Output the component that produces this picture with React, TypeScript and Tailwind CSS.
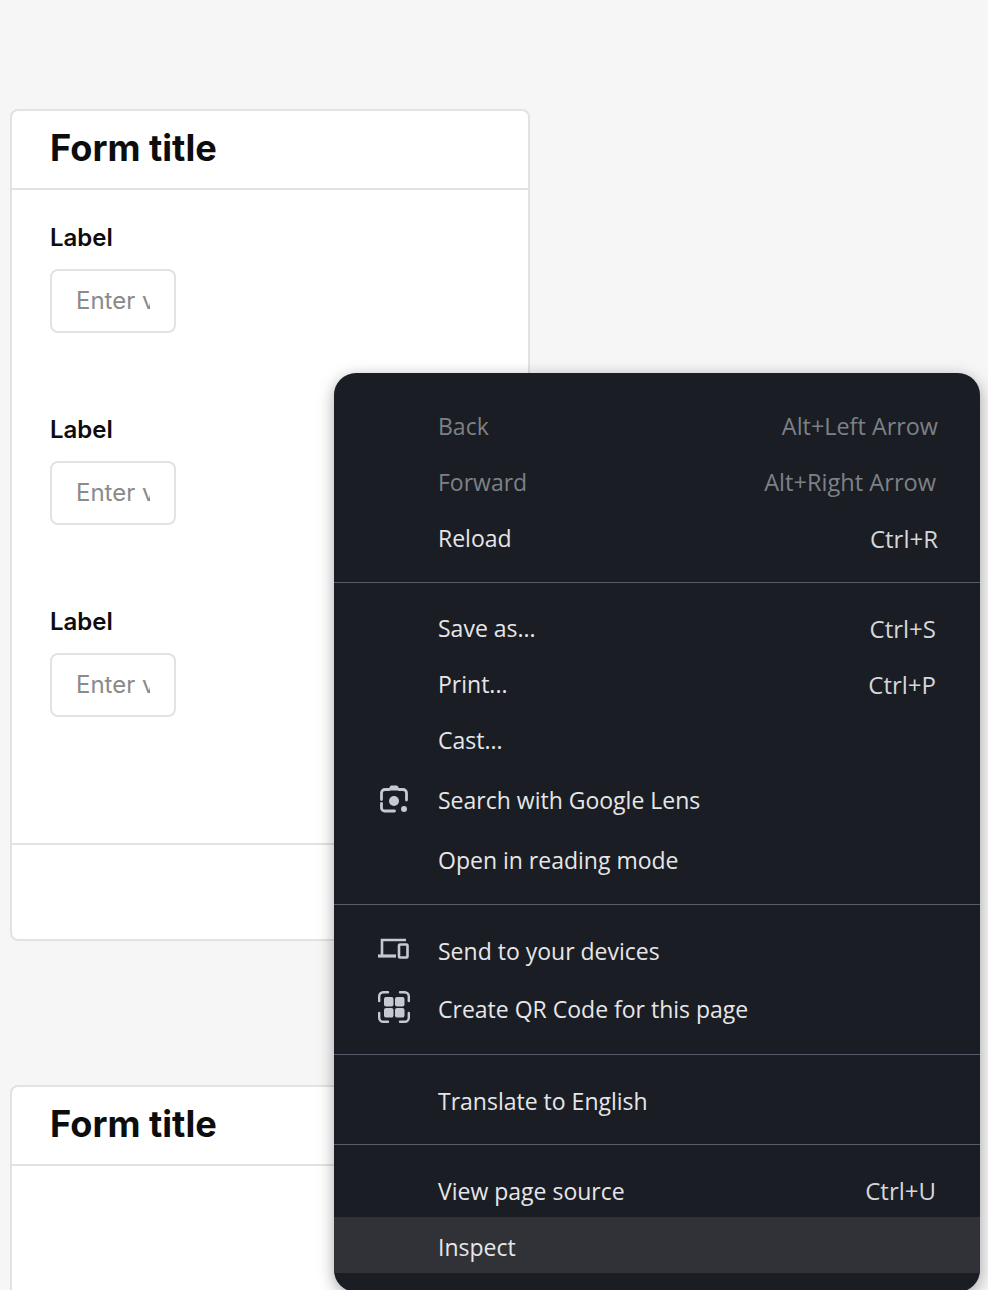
import React from 'react';

const inter = { fontFamily: 'Inter, sans-serif' };

const LensIcon = () => (
  <svg width="28" height="28" viewBox="0 0 28 28" fill="none" stroke="#c7c9d1" strokeWidth="2.8" strokeLinecap="round">
    <path d="M1.500 14.500V8a3.500 3.500 0 0 1 3.500-3.500h4M19 4.500h4a3.500 3.500 0 0 1 3.500 3.500v7" />
    <path d="M1.500 18.500V23a3 3 0 0 0 3 3H14.500" />
    <path d="M8 5.500l2-4a2 2 0 0 1 1.500-1h5a2 2 0 0 1 1.500 1l2 4z" fill="#c7c9d1" stroke="none" />
    <circle cx="14" cy="16" r="5" fill="#c7c9d1" stroke="none" />
    <circle cx="24" cy="24" r="3" fill="#c7c9d1" stroke="none" />
  </svg>
);

const DevicesIcon = () => (
  <svg width="32" height="22" viewBox="0 0 32 22" fill="none" stroke="#c7c9d1" strokeWidth="2.6">
    <path d="M4 17V2h24" />
    <path d="M0 18h18" strokeWidth="3.200" />
    <rect x="21" y="6.500" width="8.500" height="13" rx="1" />
  </svg>
);

const QrIcon = () => (
  <svg width="32" height="32" viewBox="0 0 32 32" fill="none" stroke="#c7c9d1" strokeWidth="2.400" strokeLinecap="round">
    <path d="M10 1.200H5.200a4 4 0 0 0-4 4V10M22 1.200h4.800a4 4 0 0 1 4 4V10M10 30.800H5.200a4 4 0 0 1-4-4V22M22 30.800h4.800a4 4 0 0 0 4-4V22" />
    <rect x="6" y="6" width="9.500" height="9.500" rx="2" fill="#c7c9d1" stroke="none" />
    <rect x="17" y="6" width="9.500" height="9.500" rx="2" fill="#c7c9d1" stroke="none" />
    <rect x="6" y="17" width="9.500" height="9.500" rx="2" fill="#c7c9d1" stroke="none" />
    <rect x="17" y="17" width="9.500" height="9.500" rx="2" fill="#c7c9d1" stroke="none" />
  </svg>
);

const Field = () => (
  <div className="flex flex-col items-start h-[192px]">
    <label className="text-2xl font-semibold leading-[32px] text-[#0d0d0d] mb-[15px]">Label</label>
    <input
      readOnly
      placeholder="Enter value"
      className="w-[126px] h-[64px] pl-[24px] pr-[24px] pb-[2px] text-2xl bg-white border-2 border-[#e2e2e2] rounded-lg outline-none placeholder:text-[#8a8a8a]"
    />
  </div>
);

const FormCard = ({ fields = true }: { fields?: boolean }) => (
  <div className="w-[520px] bg-white border-2 border-[#e2e2e2] rounded-lg" style={inter}>
    <div className="h-[79px] px-[38px] pb-[2px] flex items-center border-b-2 border-[#e2e2e2]">
      <h2 className="text-[36.2px] font-bold text-[#0d0d0d]">Form title</h2>
    </div>
    {fields ? (
      <>
        <div className="h-[653px] px-[38px] pt-[32px]">
          <Field />
          <Field />
          <Field />
        </div>
        <div className="h-[96px] border-t-2 border-[#e2e2e2]" />
      </>
    ) : (
      <div className="h-[300px]" />
    )}
  </div>
);

type ItemProps = {
  label: string;
  shortcut?: string;
  disabled?: boolean;
  active?: boolean;
  icon?: React.ReactNode;
  className?: string;
  iconClass?: string;
  shortcutClass?: string;
};

const Item = ({ label, shortcut, disabled, active, icon, className = 'h-[56px]', iconClass = '', shortcutClass = '' }: ItemProps) => (
  <div
    className={`relative flex items-center pl-[104px] pr-[42px] justify-between ${className} ${active ? 'bg-[#303237]' : ''} ${disabled ? 'text-[#7d8187]' : 'text-[#e6e6e8]'}`}
  >
    {icon && <span className={`absolute left-[44px] top-0 bottom-0 w-[32px] flex items-center justify-center ${iconClass}`}>{icon}</span>}
    <span className="text-[23px] pb-[2px]">{label}</span>
    {shortcut && <span className={`${disabled ? 'text-[#7d8187]' : 'text-[#d5d6da]'} ${shortcutClass}`}>{shortcut}</span>}
  </div>
);

const Separator = () => <div className="h-px bg-[#565c6a] mt-[15px] mb-[18px]" />;

const ContextMenu = () => (
  <div
    className="absolute left-[334px] top-[373px] w-[646px] h-[919px] pt-[26px] bg-[#1a1d23] rounded-[22px] overflow-hidden shadow-[0_4px_16px_rgba(0,0,0,0.35)] text-2xl"
    style={{ fontFamily: '"Open Sans", sans-serif' }}
  >
    <Item label="Back" shortcut="Alt+Left Arrow" disabled shortcutClass="text-[23.4px]" />
    <Item label="Forward" shortcut="Alt+Right Arrow" disabled shortcutClass="text-[23.6px] mr-[2px]" />
    <Item label="Reload" shortcut="Ctrl+R" />
    <Separator />
    <Item label="Save as..." shortcut="Ctrl+S" shortcutClass="mr-[2px]" />
    <Item label="Print..." shortcut="Ctrl+P" shortcutClass="mr-[2px]" />
    <Item label="Cast..." />
    <Item label="Search with Google Lens" icon={<LensIcon />} className="h-[60px] pt-[4px]" />
    <Item label="Open in reading mode" className="h-[60px] pt-[4px]" />
    <Separator />
    <Item label="Send to your devices" icon={<DevicesIcon />} className="h-[56px] pt-[2px]" iconClass="pb-[5px]" />
    <Item label="Create QR Code for this page" icon={<QrIcon />} className="h-[60px] pt-[2px]" iconClass="pb-[4px]" />
    <Separator />
    <Item label="Translate to English" className="h-[56px] pt-[2px]" />
    <Separator />
    <Item label="View page source" shortcut="Ctrl+U" className="h-[54px] pt-[4px]" shortcutClass="mr-[2px] pb-[2px]" />
    <Item label="Inspect" active className="h-[56px] pt-[6px]" />
  </div>
);

export default function App() {
  return (
    <div className="relative h-[1290px] overflow-hidden bg-[#f6f6f6] pt-[109px] pl-[10px]">
      <div className="flex flex-col gap-[144px]">
        <FormCard />
        <FormCard fields={false} />
      </div>
      <ContextMenu />
    </div>
  );
}
